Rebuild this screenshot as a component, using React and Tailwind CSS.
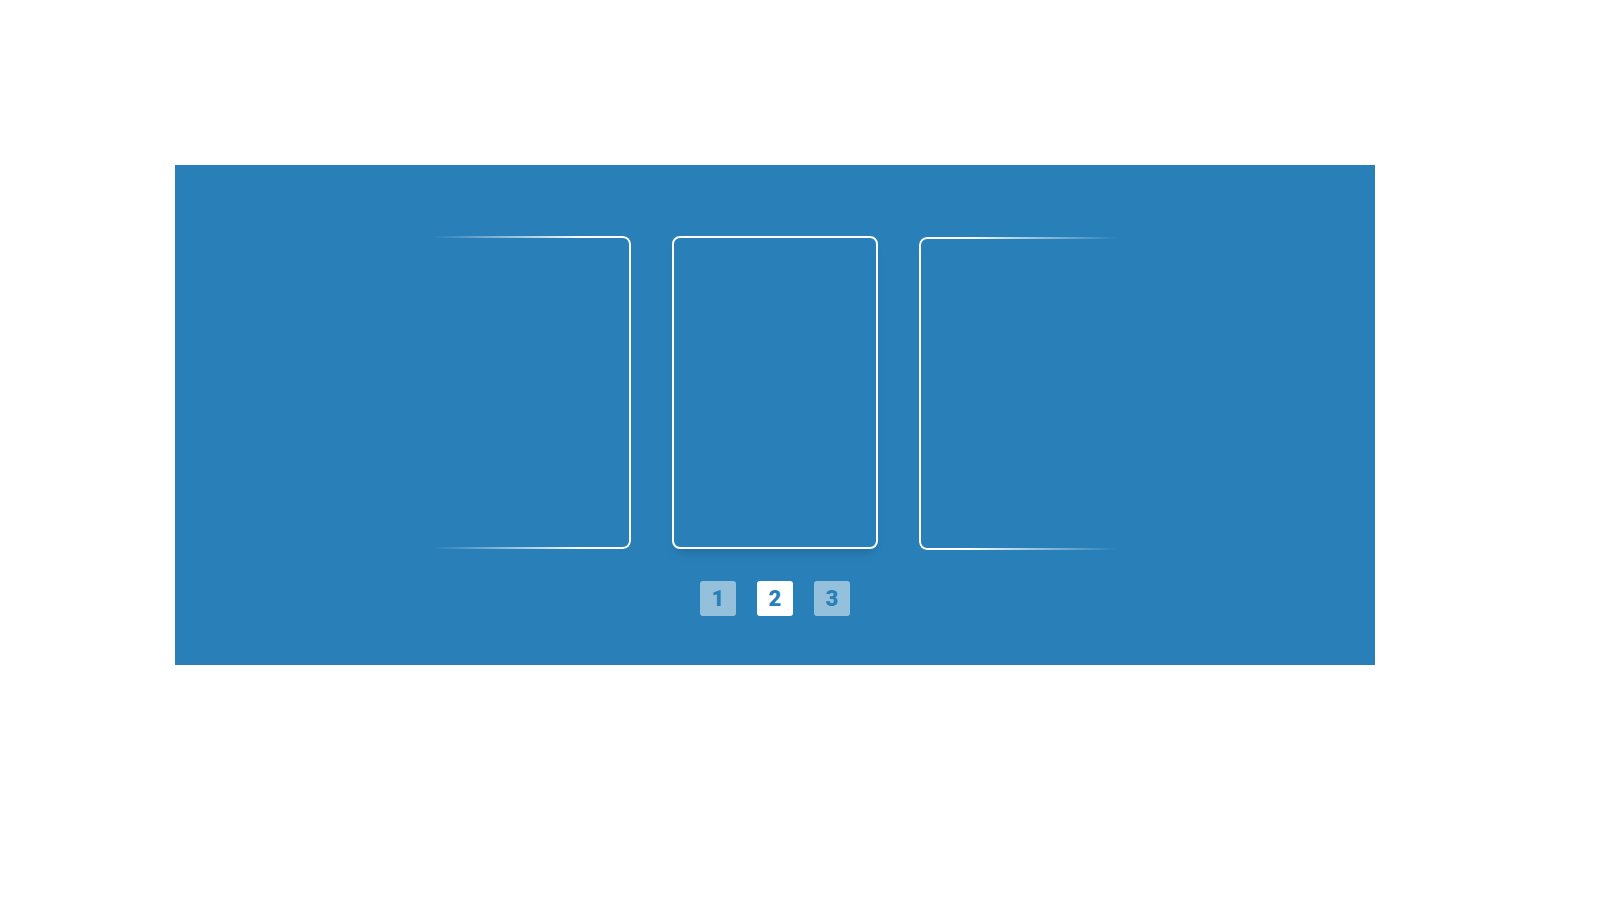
import React, { useState } from 'react';

const slides = [1, 2, 3];

const App = () => {
  const [active, setActive] = useState(1);

  return (
    <div className="min-h-[900px] bg-white pt-[165px] pl-[175px]">
      <div className="w-[1200px] h-[500px] bg-[#2980b9] flex flex-col items-center pt-[71px]">
        {/* Slides */}
        <div className="flex gap-[41px] h-[313px]">
          <div className="w-[206px] h-full rounded-lg border-2 border-white [mask-image:linear-gradient(to_left,black_22%,transparent_96%)]" />
          <div className="w-[206px] h-full rounded-lg border-2 border-white shadow-[0_8px_10px_-4px_rgba(0,0,0,0.15)]" />
          <div className="w-[206px] h-full mt-px rounded-lg border-2 border-white [mask-image:linear-gradient(to_right,black_22%,transparent_96%)]" />
        </div>
        {/* Pagination */}
        <div className="flex gap-[21px] mt-[32px]">
          {slides.map((n, idx) => (
            <button
              key={n}
              onClick={() => setActive(idx)}
              className={`w-[36px] h-[35px] rounded-[3px] flex items-center justify-center text-[22px] font-black text-[#2980b9] leading-none ${active === idx ? 'bg-white' : 'bg-white/50'}`}
              style={{ fontFamily: 'Roboto, "Liberation Sans", sans-serif' }}
            >
              {n}
            </button>
          ))}
        </div>
      </div>
    </div>
  );
};

export default App;
